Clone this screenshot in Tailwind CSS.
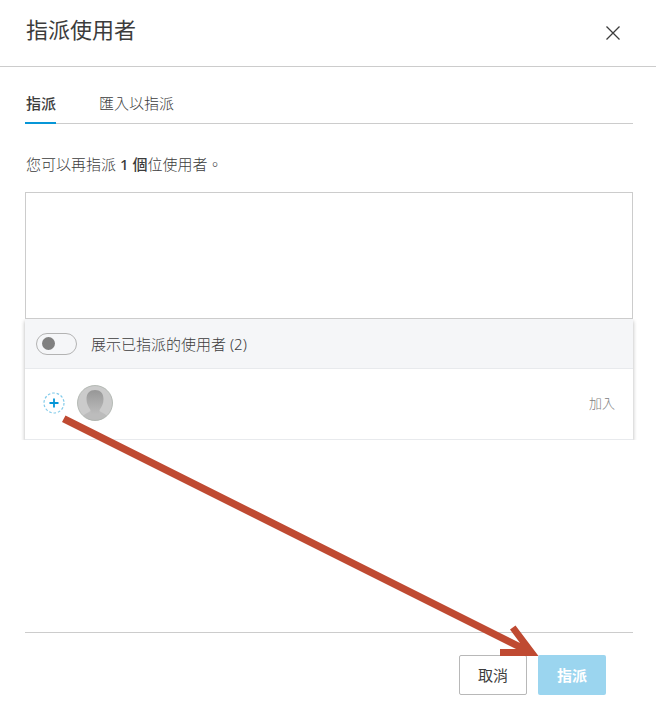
<!DOCTYPE html>
<html lang="zh-Hant">
<head>
  <meta charset="UTF-8">
  <meta name="viewport" content="width=device-width, initial-scale=1">
  <title>指派使用者</title>
  <script src="https://cdn.jsdelivr.net/npm/@tailwindcss/browser@4"></script>
</head>
<body class="bg-white text-[#3c3c3c] text-[15px] leading-5 font-light font-['Noto_Sans','Noto_Sans_CJK_TC',sans-serif]">
  <div class="relative">
    <!-- header -->
    <header class="flex items-center justify-between h-[67px] pl-[26px] pr-9 border-b border-[#cccccc]">
      <h2 class="text-[22px] leading-7 pb-2 font-normal">指派使用者</h2>
      <button type="button" aria-label="關閉" class="w-[14px] h-[14px]">
        <svg viewBox="0 0 14 14" class="w-[14px] h-[14px]" fill="none" stroke="#3c3c3c" stroke-width="1.3">
          <path d="M0.5 0.5 L13.5 13.5 M13.5 0.5 L0.5 13.5"/>
        </svg>
      </button>
    </header>

    <main class="pl-[25px] pr-[23px]">
      <!-- tabs -->
      <nav class="flex gap-[43px] h-[57px] items-end border-b border-[#cccccc]">
        <button type="button" class="-mb-px pl-px pb-[9px] border-b-2 border-[#0696d7] font-medium">指派</button>
        <button type="button" class="pb-[10px]">匯入以指派</button>
      </nav>

      <label for="users" class="block mt-[30px] pl-px">您可以再指派 <b class="font-medium">1 個</b>位使用者。</label>
      <textarea id="users" class="block w-full h-[127px] mt-[18px] p-2 border border-[#cccccc] resize-none outline-none"></textarea>

      <!-- user list -->
      <div class="-mx-1 px-1 overflow-hidden">
        <div class="shadow-[0_2px_4px_rgba(0,0,0,0.3)]">
          <div class="flex items-center gap-[14px] h-[50px] pl-[11px] bg-[#f5f6f8] border-b border-[#e8eaed]">
            <input id="showAssigned" type="checkbox" role="switch" class="appearance-none w-[41px] h-[22px] rounded-full border border-[#b3b3b3] bg-[#f5f6f8] before:block before:w-[13px] before:h-[13px] before:mt-[3px] before:ml-[5px] before:rounded-full before:bg-[#808080]">
            <label for="showAssigned">展示已指派的使用者 (2)</label>
          </div>
          <div class="flex items-center h-[71px] pl-[18px] pr-[18px] pb-[2px] bg-white border-b border-[#e8eaed]">
            <button type="button" aria-label="新增">
              <svg viewBox="0 0 22 22" class="w-[22px] h-[22px]" fill="none">
                <circle cx="11" cy="11" r="10" stroke="#82cbea" stroke-width="1.2" stroke-dasharray="2.6 1.9"/>
                <path d="M11 6.5 V15.5 M6.5 11 H15.5" stroke="#0696d7" stroke-width="1.8"/>
              </svg>
            </button>
            <svg viewBox="0 0 36 36" class="w-9 h-9 ml-3">
              <defs>
                <linearGradient id="face" x1="0" y1="0" x2="0" y2="1">
                  <stop offset="0" stop-color="#979797"/>
                  <stop offset="1" stop-color="#bcbcbc"/>
                </linearGradient>
                <clipPath id="round"><circle cx="18" cy="18" r="17.5"/></clipPath>
              </defs>
              <circle cx="18" cy="18" r="17.5" fill="#cbcbcb"/>
              <g clip-path="url(#round)">
                <path d="M5 36 C5 30 8 29 12 27 C14 26 14 25 14 23 L22 23 C22 25 22 26 24 27 C28 29 31 30 31 36 Z" fill="#bcbcbc"/>
                <path d="M18 5 C13 5 9.5 8 9.5 14 C9.5 19 11.5 22 13.5 25 L14 29 H22 L22.5 25 C24.5 22 26.5 19 26.5 14 C26.5 8 23 5 18 5 Z" fill="url(#face)"/>
              </g>
              <circle cx="18" cy="18" r="17.5" fill="none" stroke="#a9b0a9" stroke-width="0.8"/>
            </svg>
            <button type="button" class="ml-auto text-[13px] text-[#808080]">加入</button>
          </div>
        </div>
      </div>

      <!-- actions -->
      <footer class="flex justify-end gap-[11px] mt-48 pt-[22px] pr-[27px] pb-[27px] border-t border-[#cccccc]">
        <button type="button" class="w-[68px] h-10 pb-px rounded-xs border border-[#b8b8b8] bg-white font-normal">取消</button>
        <button type="button" class="w-[68px] h-10 pb-px rounded-xs bg-[#9bd5ef] text-white font-bold">指派</button>
      </footer>
    </main>

    <!-- arrow from the add icon to the assign button -->
    <svg viewBox="0 0 656 722" class="absolute top-0 left-0 w-[656px] h-[722px] pointer-events-none">
      <path d="M65.5 415.5 L62 422 L516 649 H500 V656 H538.5 L515.5 625.5 L510 629.5 L520 643 Z" fill="#bf4a32"/>
    </svg>
  </div>
</body>
</html>
